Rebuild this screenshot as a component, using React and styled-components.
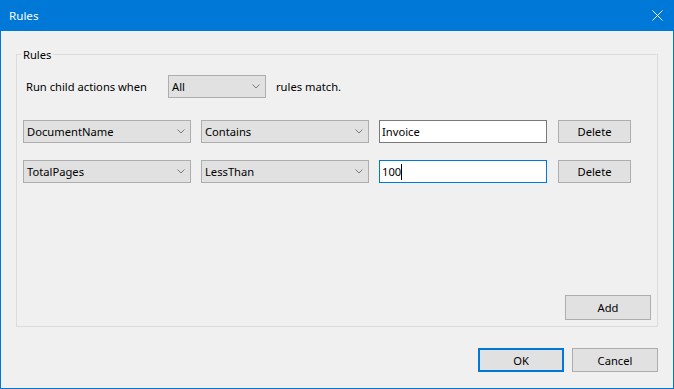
import React from 'react';
import styled, { createGlobalStyle } from 'styled-components';

const GlobalStyle = createGlobalStyle`
  html, body {
    margin: 0;
    padding: 0;
    background: #f0f0f0;
  }
  * {
    box-sizing: border-box;
  }
`;

const Window = styled.div`
  width: 674px;
  height: 389px;
  display: flex;
  flex-direction: column;
  background: #f0f0f0;
  border: 1px solid #0078d7;
  border-top: 0;
  font-family: 'Noto Sans', 'Open Sans', sans-serif;
  font-size: 11.2px;
  color: #000;
`;

const TitleBar = styled.div`
  height: 31px;
  flex: none;
  display: flex;
  align-items: center;
  justify-content: space-between;
  background: #0078d7;
  color: #fff;
  padding: 0 10px 1px 8px;
  font-size: 11.6px;
`;

const CloseIcon = styled.svg`
  display: block;
  width: 11px;
  height: 11px;
`;

const Body = styled.div`
  flex: 1;
  display: flex;
  flex-direction: column;
  padding: 15px 15px 16px;
  min-height: 0;
`;

const Group = styled.fieldset`
  flex: 1;
  display: flex;
  flex-direction: column;
  margin: 0;
  padding: 0;
  min-width: 0;
  border: 1px solid #dcdcdc;
`;

const Legend = styled.legend`
  margin-left: 4px;
  padding: 0 2px;
  line-height: 17px;
`;

const GroupBody = styled.div`
  flex: 1;
  display: flex;
  flex-direction: column;
  padding: 12px 6px 6px;
`;

const Row = styled.div`
  display: flex;
  align-items: center;
  height: 23px;
  margin-bottom: ${(p) => p.$gap || 0}px;
`;

const Label = styled.span`
  margin-left: ${(p) => p.$indent || 0}px;
  width: ${(p) => (p.$width ? `${p.$width}px` : 'auto')};
  flex: none;
  white-space: nowrap;
`;

const Combo = styled.div`
  width: ${(p) => p.$width}px;
  height: 23px;
  flex: none;
  display: flex;
  align-items: center;
  justify-content: space-between;
  margin-right: ${(p) => p.$gap || 0}px;
  padding: 0 5px 0 3px;
  background: #e1e1e1;
  border: 1px solid #adadad;
  white-space: nowrap;
`;

const Chevron = styled.svg`
  display: block;
  width: 8px;
  height: 5px;
`;

const TextBox = styled.div`
  width: ${(p) => p.$width}px;
  height: 23px;
  flex: none;
  display: flex;
  align-items: center;
  margin-right: ${(p) => p.$gap || 0}px;
  padding: 0 2px;
  background: #fff;
  border: 1px solid ${(p) => (p.$focused ? '#0078d7' : '#7a7a7a')};
`;

const Caret = styled.span`
  display: inline-block;
  width: 1px;
  height: 16px;
  background: #000;
`;

const PushButton = styled.button`
  width: ${(p) => p.$width}px;
  height: ${(p) => p.$height || 23}px;
  flex: none;
  padding: 0;
  font: inherit;
  color: #000;
  background: #e1e1e1;
  border: ${(p) => (p.$default ? '2px solid #0078d7' : '1px solid #adadad')};
  border-radius: 0;
`;

const Spacer = styled.div`
  flex: 1;
`;

const BottomRow = styled.div`
  display: flex;
  justify-content: flex-end;
  gap: ${(p) => p.$gap || 0}px;
`;

const Footer = styled(BottomRow)`
  margin-top: 21px;
`;

const ChevronIcon = () => (
  <Chevron viewBox="0 0 8 5">
    <polyline points="0.5,0.5 4,4 7.5,0.5" fill="none" stroke="#7a7a7a" strokeWidth="1" />
  </Chevron>
);

const Select = ({ value, width, gap }) => (
  <Combo $width={width} $gap={gap}>
    <span>{value}</span>
    <ChevronIcon />
  </Combo>
);

const rules = [
  { field: 'DocumentName', op: 'Contains', value: 'Invoice' },
  { field: 'TotalPages', op: 'LessThan', value: '100', focused: true },
];

export default function App() {
  return (
    <>
      <GlobalStyle />
      <Window>
        <TitleBar>
          <span>Rules</span>
          <CloseIcon viewBox="0 0 11 11">
            <path d="M0.5 0.5 L10.5 10.5 M10.5 0.5 L0.5 10.5" stroke="#fff" strokeWidth="1" />
          </CloseIcon>
        </TitleBar>
        <Body>
          <Group>
            <Legend>Rules</Legend>
            <GroupBody>
              <Row $gap={22}>
                <Label $indent={3} $width={142}>Run child actions when</Label>
                <Select value="All" width={98} gap={10} />
                <Label>rules match.</Label>
              </Row>
              {rules.map((r, i) => (
                <Row key={r.field} $gap={i === 0 ? 17 : 0}>
                  <Select value={r.field} width={168} gap={10} />
                  <Select value={r.op} width={168} gap={10} />
                  <TextBox $width={168} $gap={11} $focused={r.focused}>
                    {r.value}
                    {r.focused && <Caret />}
                  </TextBox>
                  <PushButton $width={73}>Delete</PushButton>
                </Row>
              ))}
              <Spacer />
              <BottomRow>
                <PushButton $width={86} $height={25}>Add</PushButton>
              </BottomRow>
            </GroupBody>
          </Group>
          <Footer $gap={8}>
            <PushButton $width={86} $height={24} $default>OK</PushButton>
            <PushButton $width={86} $height={24}>Cancel</PushButton>
          </Footer>
        </Body>
      </Window>
    </>
  );
}
